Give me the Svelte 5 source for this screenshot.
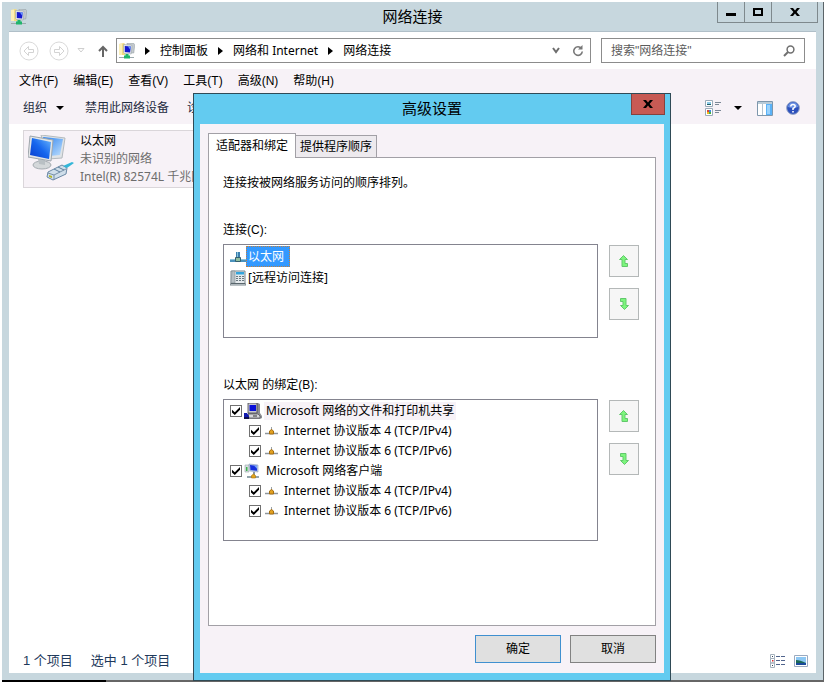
<script lang="ts">
  // Network Connections folder window with the Advanced Settings dialog open on top.

  type Binding = { label: string; icon: 'server' | 'client' | 'protocol'; checked: boolean };

  const menus = ['文件(F)', '编辑(E)', '查看(V)', '工具(T)', '高级(N)', '帮助(H)'];
  const crumbs = ['控制面板', '网络和 Internet', '网络连接'];
  const commands = ['禁用此网络设备', '诊断这个连接'];
  const connections = ['以太网', '[远程访问连接]'];

  let selected = $state(0);
  let search = $state('');
  let bindings: Binding[] = $state([
    { label: 'Microsoft 网络的文件和打印机共享', icon: 'server', checked: true },
    { label: 'Internet 协议版本 4 (TCP/IPv4)', icon: 'protocol', checked: true },
    { label: 'Internet 协议版本 6 (TCP/IPv6)', icon: 'protocol', checked: true },
    { label: 'Microsoft 网络客户端', icon: 'client', checked: true },
    { label: 'Internet 协议版本 4 (TCP/IPv4)', icon: 'protocol', checked: true },
    { label: 'Internet 协议版本 6 (TCP/IPv6)', icon: 'protocol', checked: true },
  ]);
</script>

{#snippet folderIcon()}
  <svg width="16" height="16" viewBox="0 0 16 16" aria-hidden="true">
    <path d="M0 1l5-1 1 1v11H0z" fill="#f3dc80" />
    <path d="M0 1l3-.5V12H0z" fill="#fbefb8" />
    <path d="M8 0l7 .6.8 1-1 8.400H9z" fill="#c4cace" stroke="#8f9a9f" stroke-width=".5" />
    <path d="M4.500 1.500l8 .5.500 1-.8 8-6.700-.5-1-1z" fill="#e1e5e7" stroke="#8f9a9f" stroke-width=".5" />
    <path d="M5.800 3l6 .4-.7 6.100-5.300-.5z" fill="#1418d0" />
    <path d="M8.800 3.200l3 .2-.4 3.600z" fill="#6f9cfa" />
    <path d="M6.500 11h3v1.500h1.500v3H5v-3h1.500z" fill="#1fb56b" />
    <path d="M0 14h5v1H0zM11 14h4v1h-4z" fill="#9aa8ad" />
  </svg>
{/snippet}

{#snippet crumbArrow()}
  <svg width="5" height="8" viewBox="0 0 5 8" aria-hidden="true"><path d="M0 0l5 4-5 4z" fill="#000" /></svg>
{/snippet}

{#snippet downArrow()}
  <svg width="8" height="4" viewBox="0 0 8 4" aria-hidden="true"><path d="M0 0h8L4 4z" fill="#000" /></svg>
{/snippet}

{#snippet closeMark()}
  <svg width="10" height="8" viewBox="0 0 10 8" aria-hidden="true">
    <path d="M0 0h3l2 2.400L7 0h3L6.600 4 10 8H7L5 5.600 3 8H0l3.400-4z" fill="#000" />
  </svg>
{/snippet}

{#snippet navCircle(flip: boolean)}
  <svg width="20" height="20" viewBox="0 0 20 20" aria-hidden="true">
    <circle cx="10" cy="10" r="9" fill="none" stroke="#d9d9d9" />
    <path
      d={flip ? 'M15 10l-4.500-4.500v3h-5v3h5v3z' : 'M5 10l4.500-4.500v3h5v3h-5v3z'}
      fill="none"
      stroke="#d3d3d3"
    />
  </svg>
{/snippet}

{#snippet moveButtons()}
  <div class="moves">
    <button class="move" aria-label="上移">
      <svg width="10" height="12" viewBox="0 0 10 12" aria-hidden="true">
        <path d="M4.500 .5L8.500 4.500H6v4h2.500v3h-5.500v-7H.5z" fill="#7cf57c" stroke="#62c86c" />
      </svg>
    </button>
    <button class="move" aria-label="下移">
      <svg width="10" height="12" viewBox="0 0 10 12" aria-hidden="true">
        <path d="M5.500 11.500L1.500 7.500H4v-4H1.500v-3H7v7h2.500z" fill="#7cf57c" stroke="#62c86c" />
      </svg>
    </button>
  </div>
{/snippet}

{#snippet bindingIcon(kind: string)}
  {#if kind === 'server'}
    <svg width="18" height="16" viewBox="0 0 18 16" aria-hidden="true">
      <path d="M4 0h10l2 1v9l2 3v2l-2 1H4l-1-3 2-2H4z" fill="#8d8d93" />
      <path d="M4 0h9v10H4z" fill="#c9c9cf" stroke="#44444c" stroke-width=".8" />
      <path d="M5.500 2h6.500v6H5.500z" fill="#0a10d8" />
      <path d="M4 11h10l2 2v2H5z" fill="#d6d6da" stroke="#55555c" stroke-width=".8" />
      <path d="M9 13h4" stroke="#333" />
      <path d="M0 10h3l2 3v2H0z" fill="#1018b0" />
      <path d="M0 14h5v2H0z" fill="#10104c" />
    </svg>
  {:else if kind === 'client'}
    <svg width="18" height="16" viewBox="0 0 18 16" aria-hidden="true">
      <path d="M1 2h4v7H1z" fill="#d8dee2" stroke="#98a4aa" stroke-width=".6" />
      <path d="M2 4h1.500v4H2z" fill="#3cb44c" />
      <path d="M5 1l9 1v7L6 8z" fill="#b8cdee" stroke="#8c9cb8" stroke-width=".6" />
      <path d="M6 2l7 .8v5L6.500 7z" fill="#1730dc" />
      <path d="M10 2.500l3 .3v3z" fill="#7ba8fa" />
      <path d="M9 9h2v3H9z" fill="#8a98a2" />
      <path d="M3 14h12" stroke="#94a4ac" stroke-width="2" />
      <path d="M7.500 12.500L9.500 11l2 1.500V15h-4z" fill="#e2a51d" stroke="#a87412" stroke-width=".6" />
    </svg>
  {:else}
    <svg width="13" height="8" viewBox="0 0 13 8" aria-hidden="true">
      <path d="M0 6.500h13" stroke="#8e969c" stroke-width="1.500" />
      <path d="M6.500 0v3" stroke="#9aa2a8" />
      <path d="M4.500 4L6.500 2.500l2 1.500v3h-4z" fill="#e0a020" stroke="#a46c10" />
    </svg>
  {/if}
{/snippet}

<div class="desktop">
  <main class="window">
    <header class="titlebar">
      <span class="titlebar__icon">{@render folderIcon()}</span>
      <h1>网络连接</h1>
      <div class="caption">
        <button aria-label="最小化">
          <svg width="10" height="8" viewBox="0 0 10 8" aria-hidden="true"><path d="M0 5h10v3H0z" /></svg>
        </button>
        <button aria-label="最大化">
          <svg width="10" height="8" viewBox="0 0 10 8" aria-hidden="true">
            <path d="M0 0h10v8H0zM2 2v4h6V2z" fill-rule="evenodd" />
          </svg>
        </button>
        <button class="caption__close" aria-label="关闭">{@render closeMark()}</button>
      </div>
    </header>

    <div class="client">
      <nav class="navbar">
        <button class="plain" aria-label="后退">{@render navCircle(false)}</button>
        <button class="plain" aria-label="前进">{@render navCircle(true)}</button>
        <button class="plain plain--recent" aria-label="最近">
          <svg width="8" height="5" viewBox="0 0 8 5" aria-hidden="true">
            <path d="M1 .5h6L4 4z" fill="none" stroke="#cfcfcf" />
          </svg>
        </button>
        <button class="plain plain--up" aria-label="上移一级">
          <svg width="10" height="12" viewBox="0 0 10 12" aria-hidden="true">
            <path d="M5 12V2M1 6l4-4 4 4" fill="none" stroke="#666" stroke-width="2" />
          </svg>
        </button>
        <div class="address">
          {@render folderIcon()}
          {#each crumbs as crumb}
            {@render crumbArrow()}
            <a href="#top">{crumb}</a>
          {/each}
          <button class="plain address__drop" aria-label="以前的位置">
            <svg width="8" height="7" viewBox="0 0 8 7" aria-hidden="true">
              <path d="M1 1l3 4 3-4" fill="none" stroke="#6d6d6d" stroke-width="2" />
            </svg>
          </button>
          <button class="plain" aria-label="刷新">
            <svg width="12" height="12" viewBox="0 0 12 12" aria-hidden="true">
              <path d="M9.500 3.500A4.300 4.300 0 1 0 10.300 6.500" fill="none" stroke="#777" stroke-width="1.600" />
              <path d="M6 4.500h4.500V0z" fill="#777" />
            </svg>
          </button>
        </div>
        <label class="search">
          <input type="text" aria-label="搜索" placeholder={'搜索"网络连接"'} bind:value={search} />
          <svg width="12" height="12" viewBox="0 0 12 12" aria-hidden="true">
            <circle cx="7.500" cy="4.500" r="3.400" fill="none" stroke="#707070" stroke-width="1.500" />
            <path d="M5 7L1 11" stroke="#707070" stroke-width="2" />
          </svg>
        </label>
      </nav>

      <div class="menubar">
        {#each menus as menu}<button class="plain">{menu}</button>{/each}
      </div>

      <div class="toolbar">
        <button class="plain toolbar__organize">组织 {@render downArrow()}</button>
        {#each commands as command}<button class="plain">{command}</button>{/each}
        <div class="toolbar__right">
          <button class="plain toolbar__view" aria-label="更改视图">
            <svg width="16" height="16" viewBox="0 0 16 16" aria-hidden="true">
              <path d="M.5 .5h7v6h-7zM.5 8.500h7v7h-7z" fill="#fff" stroke="#9aabb8" />
              <path d="M2 2h4v3H2z" fill="#8ccbe8" />
              <path d="M2 4h4v1H2z" fill="#1e5c64" />
              <path d="M2 10h2v2H2z" fill="#e04a30" />
              <path d="M4 10h2v2H4z" fill="#3a8ae0" />
              <path d="M2 12h2v2H2z" fill="#f0b820" />
              <path d="M4 12h2v2H4z" fill="#48b040" />
              <path d="M10 2.500h6M10 4.500h4M10 10.500h6M10 12.500h4" stroke="#7c8896" />
            </svg>
            {@render downArrow()}
          </button>
          <button class="plain" aria-label="预览窗格">
            <svg width="16" height="15" viewBox="0 0 16 15" aria-hidden="true">
              <path d="M.5 .5h15v14H.5z" fill="#fff" stroke="#7e97ac" />
              <path d="M1 1h14v2H1z" fill="#b8cbd8" />
              <path d="M5.500 3v11" stroke="#b4c4d0" />
              <path d="M9 3h6v11H9z" fill="#5ab2f8" />
              <path d="M10 4h3v9h-3z" fill="#9ad2fc" />
            </svg>
          </button>
          <button class="plain" aria-label="帮助">
            <svg width="14" height="14" viewBox="0 0 14 14" aria-hidden="true">
              <circle cx="7" cy="7" r="6.400" fill="#2c50bc" stroke="#98a8c8" />
              <path d="M2 6a5 4.500 0 0 1 10 0q-5 2-10 0z" fill="#6c92e4" />
              <path d="M4.800 5.500Q4.800 3.500 7 3.500t2.200 1.800Q9.200 6.500 7 7.500V9" fill="none" stroke="#fff" stroke-width="1.500" />
              <path d="M6.200 10h1.600v1.500H6.200z" fill="#fff" />
            </svg>
          </button>
        </div>
      </div>

      <section class="items">
        <button class="adapter">
          <svg width="48" height="48" viewBox="0 0 48 48" aria-hidden="true">
            <defs>
              <linearGradient id="front-screen" x1="0" y1="1" x2="1" y2="0">
                <stop offset="0" stop-color="#0a3ccc" />
                <stop offset=".5" stop-color="#1666ee" />
                <stop offset="1" stop-color="#6cb8fc" />
              </linearGradient>
              <linearGradient id="back-screen" x1="0" y1="0" x2="1" y2="1">
                <stop offset="0" stop-color="#2a80f0" />
                <stop offset="1" stop-color="#c0e0fc" />
              </linearGradient>
            </defs>
            <path d="M13 0l24 3-3 20-14 1z" fill="#dfe3e6" stroke="#b4babe" />
            <path d="M15 2l20 2-3 16-11 1z" fill="url(#back-screen)" />
            <ellipse cx="14" cy="30" rx="9" ry="4" fill="#d4d8da" stroke="#a4abb0" />
            <path d="M10 24l7 1v5l-6-1z" fill="#b9c0c4" />
            <path d="M2 1l23 4-2 21L0 22z" fill="#e3e6e8" stroke="#9ea6ac" />
            <path d="M4 3l19 4-2 17L2 20z" fill="url(#front-screen)" />
            <path d="M20 37l14-7 5 3-1 6-13 6-6-3z" fill="#cfdeea" stroke="#6a88a4" />
            <path d="M20 38l6 2 12-6M26 40v5" fill="none" stroke="#7891a8" />
            <path d="M21 40l3 1v2l-3-1z" fill="#b4b82c" />
            <path d="M35 31l9-4 2 1-7 5z" fill="#34b6d8" />
            <path d="M26 34l6 3m-2-5l6 3" stroke="#5d7e9c" />
          </svg>
          <span class="adapter__text">
            <span class="adapter__name">以太网</span>
            <span>未识别的网络</span>
            <span>Intel(R) 82574L 千兆网络连接</span>
          </span>
        </button>
      </section>

      <footer class="status">
        <span>1 个项目</span>
        <span>选中 1 个项目</span>
        <div class="status__views">
          <button class="plain" aria-label="详细信息">
            <svg width="16" height="14" viewBox="0 0 16 14" aria-hidden="true">
              <path d="M.5 .5h4v4h-4zM.5 4.500h4v4.500h-4zM.5 9h4v4.500h-4z" fill="#fff" stroke="#a5b2be" />
              <path d="M2 2h1v1H2zM2 11h1v1H2z" fill="#345" />
              <path d="M2 6h1.500v1.500H2z" fill="#e03030" />
              <path d="M6 2.500h4m1 0h4M6 6.500h4m1 0h4M6 10.500h4m1 0h4" stroke="#50648c" />
            </svg>
          </button>
          <button class="plain" aria-label="大图标">
            <svg width="14" height="12" viewBox="0 0 14 12" aria-hidden="true">
              <path d="M.5 .5h13v11H.5z" fill="#fff" stroke="#9aaac0" />
              <path d="M2 2h10v8H2z" fill="#8dc8f4" />
              <path d="M2 5q4 0 10 3v2H2z" fill="#1b6858" />
              <path d="M2 8h10v2H2z" fill="#1a4a9c" />
            </svg>
          </button>
        </div>
      </footer>
    </div>
  </main>
  <div class="taskbar"><span></span></div>

  <div class="dialog" role="dialog" aria-labelledby="dialog-title">
    <header class="dialog__title">
      <h2 id="dialog-title">高级设置</h2>
      <button class="dialog__close" aria-label="关闭">{@render closeMark()}</button>
    </header>
    <div class="dialog__body">
      <div class="tabs" role="tablist">
        <button class="tab tab--active" role="tab" aria-selected="true">适配器和绑定</button>
        <button class="tab" role="tab" aria-selected="false">提供程序顺序</button>
      </div>
      <div class="panel" role="tabpanel">
        <p class="panel__intro">连接按被网络服务访问的顺序排列。</p>

        <div class="group">
          <h3 id="connections-label">连接(C):</h3>
          <div class="group__row">
            <div class="list list--connections" role="listbox" aria-labelledby="connections-label">
              {#each connections as name, i}
                <button
                  class="connection"
                  class:connection--selected={selected === i}
                  role="option"
                  aria-selected={selected === i}
                  onclick={() => (selected = i)}
                >
                  {#if i === 0}
                    <svg width="16" height="12" viewBox="0 0 16 12" aria-hidden="true">
                      <path d="M0 8h16v3H0z" fill="#4b92bc" />
                      <path d="M0 8h16v1H0z" fill="#8cc4dc" />
                      <path d="M6 1h4v6H6z" fill="#3c80b0" />
                      <path d="M7 1h1v6H7z" fill="#8cc4dc" />
                      <path d="M5.500 6.500h5v4h-5z" fill="#8fbea0" stroke="#336070" />
                    </svg>
                  {:else}
                    <svg width="16" height="16" viewBox="0 0 16 16" aria-hidden="true">
                      <path d="M1 1h14v12l1 2H0l1-2z" fill="#e4e9ec" stroke="#78858c" />
                      <path d="M2 1h3v12H1z" fill="#b6bec3" stroke="#849096" stroke-width=".6" />
                      <path d="M6 2h8v2.500H6z" fill="#32a4dc" />
                      <path d="M6 6.500h8M6 8.500h8M6 10.500h8" stroke="#6a7880" stroke-dasharray="2 1" />
                      <path d="M1 13.500h14" stroke="#59666c" />
                    </svg>
                  {/if}
                  <span>{name}</span>
                </button>
              {/each}
            </div>
            {@render moveButtons()}
          </div>
        </div>

        <div class="group">
          <h3 id="bindings-label">以太网 的绑定(B):</h3>
          <div class="group__row">
            <div class="list list--bindings" role="group" aria-labelledby="bindings-label">
              {#each bindings as binding, i}
                <label class="binding" class:binding--child={binding.icon === 'protocol'}>
                  <input type="checkbox" bind:checked={binding.checked} />
                  {@render bindingIcon(binding.icon)}
                  <span class:current={i === 0}>{binding.label}</span>
                </label>
              {/each}
            </div>
            {@render moveButtons()}
          </div>
        </div>
      </div>
      <div class="actions">
        <button class="action action--default">确定</button>
        <button class="action">取消</button>
      </div>
    </div>
  </div>
</div>

<style>
  :global(body) {
    background: #fff;
  }
  .desktop {
    --ui: 'Noto Sans', 'Noto Sans CJK SC', sans-serif;
    --narrow: 'Liberation Sans', 'Noto Sans CJK SC', sans-serif;
    position: relative;
    display: flex;
    flex-direction: column;
    box-sizing: border-box;
    min-height: 100vh;
    padding: 2px;
    font: 12px/20px var(--ui);
    color: #000;
  }
  button {
    font: inherit;
    color: inherit;
    padding: 0;
    cursor: default;
    white-space: nowrap;
  }
  svg {
    display: block;
    flex: none;
  }
  h1,
  h2,
  h3,
  p {
    margin: 0;
    font-weight: 400;
  }
  h1,
  h2 {
    flex: 1;
    text-align: center;
    font-size: 15px;
  }
  h3 {
    font-size: 12px;
    font-family: var(--narrow);
  }
  .plain {
    display: flex;
    align-items: center;
    border: 0;
    background: none;
  }

  .window {
    flex: 1;
    display: flex;
    flex-direction: column;
    padding: 0 7px 7px;
    border-right: 1px solid #5b6468;
    background: #c7d7de;
  }
  .titlebar {
    position: relative;
    display: flex;
    align-items: center;
    height: 29px;
  }
  .titlebar h1 {
    line-height: 29px;
  }
  .titlebar__icon {
    position: absolute;
    left: 2px;
  }
  .caption {
    position: absolute;
    top: 0;
    right: -2px;
    display: flex;
    border: 1px solid #7e898d;
    border-top: 0;
  }
  .caption button {
    display: grid;
    place-items: center;
    width: 27px;
    height: 20px;
    border: 0;
    border-right: 1px solid #7e898d;
    background: none;
  }
  .caption .caption__close {
    width: 45px;
    border-right: 0;
  }
  .client {
    flex: 1;
    display: flex;
    flex-direction: column;
    border-top: 1px solid #b0bfc8;
    background: #fff;
  }

  .navbar {
    display: flex;
    align-items: center;
    gap: 10px;
    height: 37px;
    padding: 0 11px 0 10px;
  }
  .plain--recent {
    margin: 0 3px 0 -2px;
  }
  .plain--up {
    margin-right: -2px;
  }
  .address,
  .search {
    display: flex;
    align-items: center;
    box-sizing: border-box;
    height: 25px;
    border: 1px solid #8c8c8c;
    background: #fff;
  }
  .address {
    flex: 1;
    gap: 10px;
    padding: 0 6px 0 2px;
  }
  .address a {
    color: inherit;
    text-decoration: none;
    white-space: nowrap;
  }
  .address__drop {
    margin: 0 2px 0 auto;
  }
  .search {
    width: 204px;
    padding: 0 9px;
  }
  .search input {
    flex: 1;
    min-width: 0;
    padding: 0;
    border: 0;
    outline: 0;
    background: none;
    font: 12px var(--narrow);
  }
  .search input::placeholder {
    color: #5c5c5c;
  }

  .menubar {
    display: flex;
    gap: 15px;
    height: 23px;
    padding: 0 10px;
    background: #f7f2f7;
    font-family: var(--narrow);
  }
  .toolbar {
    display: flex;
    align-items: center;
    gap: 18px;
    height: 32px;
    padding: 0 16px 0 14px;
    background: #f7f2f7;
    color: #1e2b3e;
  }
  .toolbar__organize {
    gap: 9px;
    margin-right: 3px;
  }
  .toolbar__right {
    display: flex;
    align-items: center;
    gap: 13px;
    margin-left: auto;
  }
  .toolbar__view {
    gap: 13px;
    margin-right: 2px;
  }

  .items {
    flex: 1;
    padding: 6px 14px;
  }
  .adapter {
    display: flex;
    align-items: center;
    gap: 4px;
    height: 58px;
    padding: 0 4px;
    border: 1px solid #dad6da;
    background: #f7f2f7;
    text-align: left;
    line-height: 18px;
    color: #6d6d6d;
  }
  .adapter__text {
    display: grid;
  }
  .adapter__name {
    color: #000;
  }
  .status {
    display: flex;
    align-items: center;
    gap: 18px;
    height: 24px;
    padding: 0 8px 0 14px;
    font: 13px/20px var(--narrow);
    color: #1e395b;
  }
  .status__views {
    display: flex;
    align-items: center;
    gap: 8px;
    margin-left: auto;
  }
  .taskbar {
    height: 2px;
    background: #666;
  }
  .taskbar span {
    display: block;
    width: 104px;
    height: 2px;
    background: #000;
  }

  .dialog {
    position: absolute;
    inset: 93px 155px 3px 193px;
    display: flex;
    flex-direction: column;
    padding: 0 6px 7px;
    border: 1px solid #2f4a56;
    background: #63cbf0;
  }
  .dialog__title {
    position: relative;
    display: flex;
    height: 30px;
  }
  .dialog__title h2 {
    line-height: 28px;
  }
  .dialog__close {
    position: absolute;
    top: 0;
    right: -1px;
    display: grid;
    place-items: center;
    width: 34px;
    height: 21px;
    border: 1px solid #84423f;
    border-top: 0;
    background: #c75a54;
  }
  .dialog__body {
    flex: 1;
    display: flex;
    flex-direction: column;
    padding: 9px 8px 10px;
    background: #f7f2f7;
  }
  .tabs {
    display: flex;
    align-items: flex-end;
  }
  .tab {
    height: 22px;
    padding: 0 4px;
    border: 1px solid #a2a0a6;
    border-left: 0;
    border-bottom: 0;
    background: #edeaee;
  }
  .tab--active {
    z-index: 1;
    height: 25px;
    margin-bottom: -1px;
    padding: 0 7px;
    border-left: 1px solid #a2a0a6;
    background: #fff;
  }
  .panel {
    flex: 1;
    padding: 15px 16px 15px 14px;
    border: 1px solid #a2a0a6;
    background: #fff;
  }
  .panel__intro {
    margin-bottom: 27px;
  }
  .group {
    display: grid;
    gap: 4px;
    margin-bottom: 37px;
  }
  .group__row {
    display: flex;
    align-items: flex-start;
    gap: 11px;
  }
  .list {
    flex: 1;
    box-sizing: border-box;
    padding: 1px 6px;
    border: 1px solid #84848f;
    background: #fff;
  }
  .list--connections {
    min-height: 94px;
  }
  .list--bindings {
    min-height: 142px;
  }
  .connection {
    display: flex;
    align-items: center;
    height: 21px;
    border: 0;
    background: none;
  }
  .connection span {
    padding: 0 2px;
  }
  .connection--selected span {
    padding: 0 5px 0 1px;
    border: 1px dotted #c08040;
    background: #3399ff;
    color: #fff;
    line-height: 19px;
  }
  .binding {
    display: flex;
    align-items: center;
    gap: 2px;
    height: 20px;
  }
  .binding--child {
    gap: 4px;
    padding-left: 19px;
  }
  .binding span {
    padding: 0 2px;
    line-height: 18px;
    white-space: nowrap;
  }
  .binding .current {
    background: #f7f2f7;
  }
  .binding input {
    appearance: none;
    display: grid;
    place-items: center;
    box-sizing: border-box;
    width: 12px;
    height: 12px;
    margin: 0;
    border: 1px solid #707070;
    background: #fff;
  }
  .binding input:checked::before {
    content: '';
    width: 8px;
    height: 8px;
    background: #000;
    clip-path: polygon(0 35%, 35% 65%, 100% 0, 100% 35%, 35% 100%, 0 70%);
  }
  .moves {
    display: grid;
    gap: 11px;
    padding-top: 1px;
  }
  .move {
    display: grid;
    place-items: center;
    width: 30px;
    height: 32px;
    border: 1px solid #b4b8b8;
    background: #f6f6f6;
  }
  .actions {
    display: flex;
    justify-content: flex-end;
    gap: 9px;
    padding-top: 9px;
  }
  .action {
    width: 86px;
    height: 28px;
    border: 1px solid #828282;
    background: #e0e0e0;
  }
  .action--default {
    border-color: #4090d0;
  }
</style>
